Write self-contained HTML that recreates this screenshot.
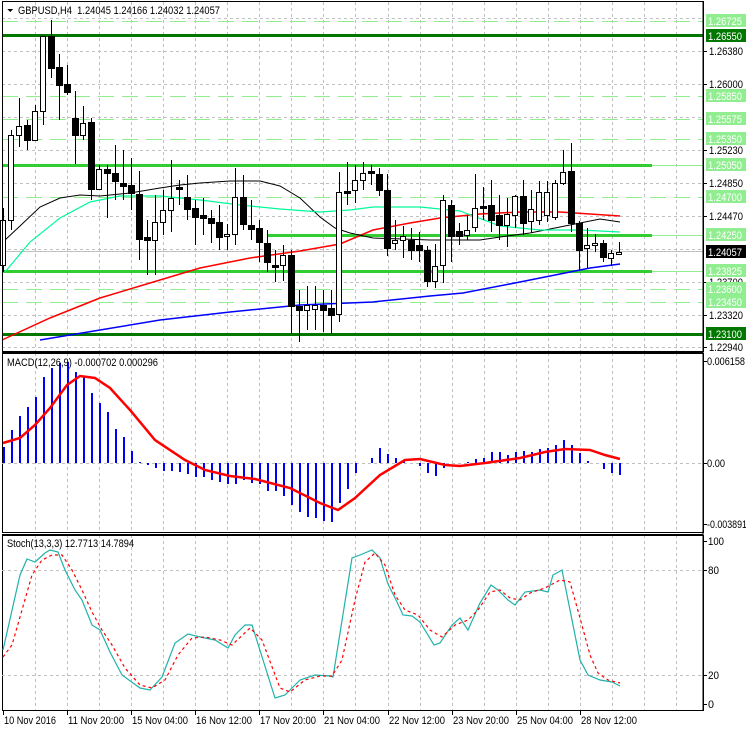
<!DOCTYPE html>
<html><head><meta charset="utf-8"><style>
html,body{margin:0;padding:0;background:#fff;}
svg{display:block;font-family:"Liberation Sans",sans-serif;}
</style></head><body>
<svg id="s" width="746" height="731" viewBox="0 0 746 731" xmlns="http://www.w3.org/2000/svg" shape-rendering="crispEdges"></svg>
<script>
var s=document.getElementById('s'),h='';
function L(x1,y1,x2,y2,c,w,d){h+='<line x1="'+x1+'" y1="'+y1+'" x2="'+x2+'" y2="'+y2+'" stroke="'+c+'" stroke-width="'+(w||1)+'"'+(d?' stroke-dasharray="'+d+'"':'')+'/>';}
function R(x,y,w,hh,f,st){h+='<rect x="'+x+'" y="'+y+'" width="'+w+'" height="'+hh+'" fill="'+f+'"'+(st?' stroke="'+st+'"':'')+'/>';}
function T(x,y,t,c,tl){h+='<text x="'+x+'" y="'+y+'" font-size="11" fill="'+(c||'#000')+'"'+(tl?' textLength="'+tl+'" lengthAdjust="spacingAndGlyphs"':'')+'>'+t+'</text>';}
function P(pts,c,w,d){h+='<polyline fill="none" shape-rendering="auto" stroke="'+c+'" stroke-width="'+w+'"'+(d?' stroke-dasharray="'+d+'"':'')+' points="'+pts+'"/>';}
var vx=[35,67,99,131,163,195,227,259,291,323,355,388,420,452,484,516,548,580,612,644,676];
vx.forEach(function(x){L(x+.5,2,x+.5,351,'#c0c0c0',1,'3 3');L(x+.5,353,x+.5,532,'#c0c0c0',1,'3 3');L(x+.5,535,x+.5,710,'#c0c0c0',1,'3 3');});
[18,51,84,117,150,183,216,249,282,315,347].forEach(function(y){L(2,y+.5,703,y+.5,'#c0c0c0',1,'3 3');});
[[21,'1.26725'],[96,'1.25850'],[119,'1.25575'],[139,'1.25350'],[197,'1.24700'],[289,'1.23600'],[302,'1.23450']].forEach(function(a){L(2,a[0]+.5,703,a[0]+.5,'#90ee90',1,'16 8');});
L(2,165.5,652,165.5,'#32cd32',3);L(652,165.5,703,165.5,'#90ee90',1);
L(267,235.5,652,235.5,'#32cd32',3);L(652,235.5,703,235.5,'#90ee90',1);
L(2,271.5,652,271.5,'#32cd32',3);L(652,271.5,703,271.5,'#90ee90',1);
L(2,35.5,703,35.5,'#007800',3);L(2,334.5,703,334.5,'#007800',3);
L(2,251.5,703,251.5,'#c0c0c0',1);
P('40,340 100,330 160,320 230,312 300,305 373,302 430,296 463,293 520,282 560,274 590,268 620,264','#0000ff',1.5);
P('2,340 50,318 100,298 150,283 200,268 250,258 300,251 340,244 373,230 410,223 440,218 480,214 520,212 560,212 620,216','#ff0000',1.5);
P('5,240 20,226 40,207 60,198 80,195 100,196 130,193 160,188 180,185 200,183 230,181 260,181 280,186 300,198 320,217 335,228 350,233 373,238 430,240 480,240 500,237 530,233 560,227 580,223 600,219 620,222','#000',1);
P('5,272 30,242 60,218 90,202 120,196 160,196 200,200 240,205 280,209 320,212 350,210 373,207 420,207 460,211 500,226 540,230 580,230 620,232','#00fa9a',1.2);
var C=[[3,265,220,272,208],[11,220,135,230,130],[19,135,126,147,98],[27,125,140,120,150],[35,140,111,140,105],[43,111,36,125,36],[51,36,68,20,78],[59,67,85,54,120],[67,84,92,65,95],[75,118,135,91,164],[83,135,123,140,106],[91,122,189,118,200],[99,189,169,190,165],[107,169,173,165,218],[115,173,181,145,200],[123,183,186,150,200],[131,185,193,158,210],[139,194,239,171,260],[147,237,240,220,275],[155,240,222,195,275],[163,222,210,190,235],[171,210,198,160,232],[179,187,189,180,205],[187,197,209,175,220],[195,208,217,200,245],[203,215,218,198,235],[211,218,223,210,243],[219,222,237,205,250],[227,236,234,224,250],[235,234,197,168,245],[243,197,224,175,230],[251,225,229,200,240],[259,228,242,220,262],[267,243,262,230,272],[275,265,267,250,282],[283,265,255,245,281],[291,255,306,250,334],[299,306,310,290,342],[307,310,305,286,330],[315,309,305,286,330],[323,305,310,290,332],[331,308,315,290,334],[339,314,192,172,322],[347,191,193,162,205],[355,190,180,165,203],[363,180,173,162,190],[371,171,173,165,185],[379,174,190,168,196],[387,190,248,174,256],[395,243,240,220,250],[403,240,236,226,258],[411,240,250,228,260],[419,245,250,232,262],[427,250,281,246,287],[435,281,266,244,288],[443,265,200,195,283],[451,205,236,200,262],[459,231,236,223,245],[467,235,230,215,240],[475,227,208,174,232],[483,206,208,187,220],[491,205,220,180,232],[499,215,225,195,240],[507,225,214,198,247],[515,215,196,195,228],[523,196,223,180,235],[531,221,209,190,233],[539,220,192,181,225],[547,215,192,181,222],[555,217,183,180,220],[563,183,172,150,185],[571,171,223,143,232],[579,223,250,221,270],[587,248,245,228,268],[595,245,243,234,252],[603,243,257,240,262],[611,258,253,250,266],[619,253,252,242,255]];
C.forEach(function(c){var x=c[0],o=c[1],cl=c[2],hi=Math.min(c[3],c[4],o,cl),lo=Math.max(c[3],c[4],o,cl);
L(x+.5,hi,x+.5,lo,'#000',1);var t=Math.min(o,cl),b=Math.max(o,cl);if(b-t<2)b=t+2;
if(cl<o)R(x-2.5,t+.5,5,b-t,'#fff','#000');else R(x-3,t,7,b-t+1,'#000');});
R(2.5,1.5,701,350,'none','#000');
R(2.5,353.5,701,179,'none','#000');
R(2.5,535.5,701,175,'none','#000');
L(2,352.5,703,352.5,'#000');L(2,534.5,703,534.5,'#000');
L(2,463.5,703,463.5,'#c0c0c0',1,'3 3');
var M=[447,430,416,407,397,377,368,363,362,372,377,393,403,412,429,437,451,462,465,468,471,471,472,474,477,477,480,482,484,484,480,483,484,491,491,496,505,512,517,518,521,522,503,489,473,463,458,448,454,458,460,463,466,473,476,468,463,463,462,459,458,452,452,455,452,451,452,449,448,445,440,445,453,461,463,469,473,475];
M.forEach(function(v,i){var x=3+8*i;if(Math.abs(v-463)>0)R(x,Math.min(463,v),2,Math.max(1,Math.abs(v-463)),'#0000ff');});
P('3,443 20,438 35,425 50,408 67,385 80,376 95,378 110,388 130,410 155,440 185,460 205,470 230,476 255,479 290,488 320,503 338,510 355,498 380,475 395,466 405,460 420,459 445,465 460,466 485,463 520,458 545,452 565,449 590,450 605,455 620,459','#ff0000',2.5);
L(2,570.5,703,570.5,'#c0c0c0',1,'3 3');L(2,675.5,703,675.5,'#c0c0c0',1,'3 3');
var S=[[3,650],[20,575],[27,559],[35,562],[45,553],[50,550],[58,552],[65,570],[75,590],[82,600],[92,625],[100,630],[110,652],[122,675],[140,688],[150,690],[162,677],[175,643],[188,634],[200,637],[215,640],[228,648],[235,635],[245,625],[252,625],[275,698],[285,695],[300,680],[315,675],[330,676],[333,677],[352,558],[360,555],[372,550],[380,558],[388,584],[397,602],[403,615],[412,616],[420,622],[434,645],[440,643],[452,625],[460,618],[468,630],[480,603],[491,585],[498,590],[508,600],[515,605],[525,592],[540,590],[548,592],[553,575],[562,570],[570,610],[580,660],[588,675],[600,680],[612,682],[620,686]];
P(S.map(function(p){return p[0]+','+p[1];}).join(' '),'#20b2aa',1.2);
var S2=[[3,657],[12,645],[22,610],[32,575],[42,560],[52,555],[62,555],[72,570],[82,590],[92,612],[102,630],[112,645],[125,668],[140,685],[152,688],[165,680],[178,655],[192,638],[205,637],[220,640],[232,645],[250,628],[262,640],[280,688],[290,692],[305,680],[320,676],[332,676],[342,660],[355,600],[365,562],[375,553],[385,565],[395,595],[405,610],[418,615],[430,630],[442,637],[455,625],[468,620],[478,610],[490,592],[500,590],[510,598],[520,600],[530,593],[545,588],[560,580],[570,582],[580,618],[590,655],[598,673],[608,680],[620,683]];
P(S2.map(function(p){return p[0]+','+p[1];}).join(' '),'#ff0000',1.2,'3 3');
function tick(y){L(703,y+.5,707,y+.5,'#000');}
[[51,'1.26380'],[84,'1.26000'],[150,'1.25230'],[183,'1.24850'],[216,'1.24470'],[282,'1.23700'],[315,'1.23320'],[347,'1.22940']].forEach(function(a){tick(a[0]);T(709,a[0]+4,a[1],'#000',34);});
[[21,'1.26725'],[96,'1.25850'],[119,'1.25575'],[139,'1.25350'],[165,'1.25050'],[197,'1.24700'],[235,'1.24250'],[271,'1.23825'],[289,'1.23600'],[302,'1.23450']].forEach(function(a){R(706,a[0]-7,40,13,'#90ee90');T(708,a[0]+4,a[1],'#fff',34);});
[[36,'1.26550'],[334,'1.23100']].forEach(function(a){R(706,a[0]-7,40,13,'#007800');T(708,a[0]+4,a[1],'#fff',34);});
R(706,245,40,13,'#000');T(708,256,'1.24057','#fff',34);
[[361,'0.006158',38],[463,'0.00',18],[524,'-0.003891',40]].forEach(function(a){tick(a[0]);T(707,a[0]+4,a[1],'#000',a[2]);});
[[541,'100',16],[570,'80',11],[675,'20',11],[704,'0',6]].forEach(function(a){tick(a[0]);T(708,a[0]+4,a[1],'#000',a[2]);});
L(703,1,703,711,'#000');
[['10 Nov 2016',3],['11 Nov 20:00',67],['15 Nov 04:00',131],['16 Nov 12:00',195],['17 Nov 20:00',259],['21 Nov 04:00',323],['22 Nov 12:00',388],['23 Nov 20:00',452],['25 Nov 04:00',516],['28 Nov 12:00',580]].forEach(function(a){L(a[1]+.5,711,a[1]+.5,715,'#000');T(a[1]+1,724,a[0],'#000',a[0].length==11?52:56);});
h+='<polygon points="7,9 13,9 10,12" fill="#000"/>';
T(18,14,'GBPUSD,H4&#160;&#160;1.24045 1.24166 1.24032 1.24057','#000',202);
T(7,366,'MACD(12,26,9) -0.000702 0.000296','#000',151);
T(7,547,'Stoch(13,3,3) 12.7713 14.7894','#000',127);
s.innerHTML=h;
</script>
</body></html>
